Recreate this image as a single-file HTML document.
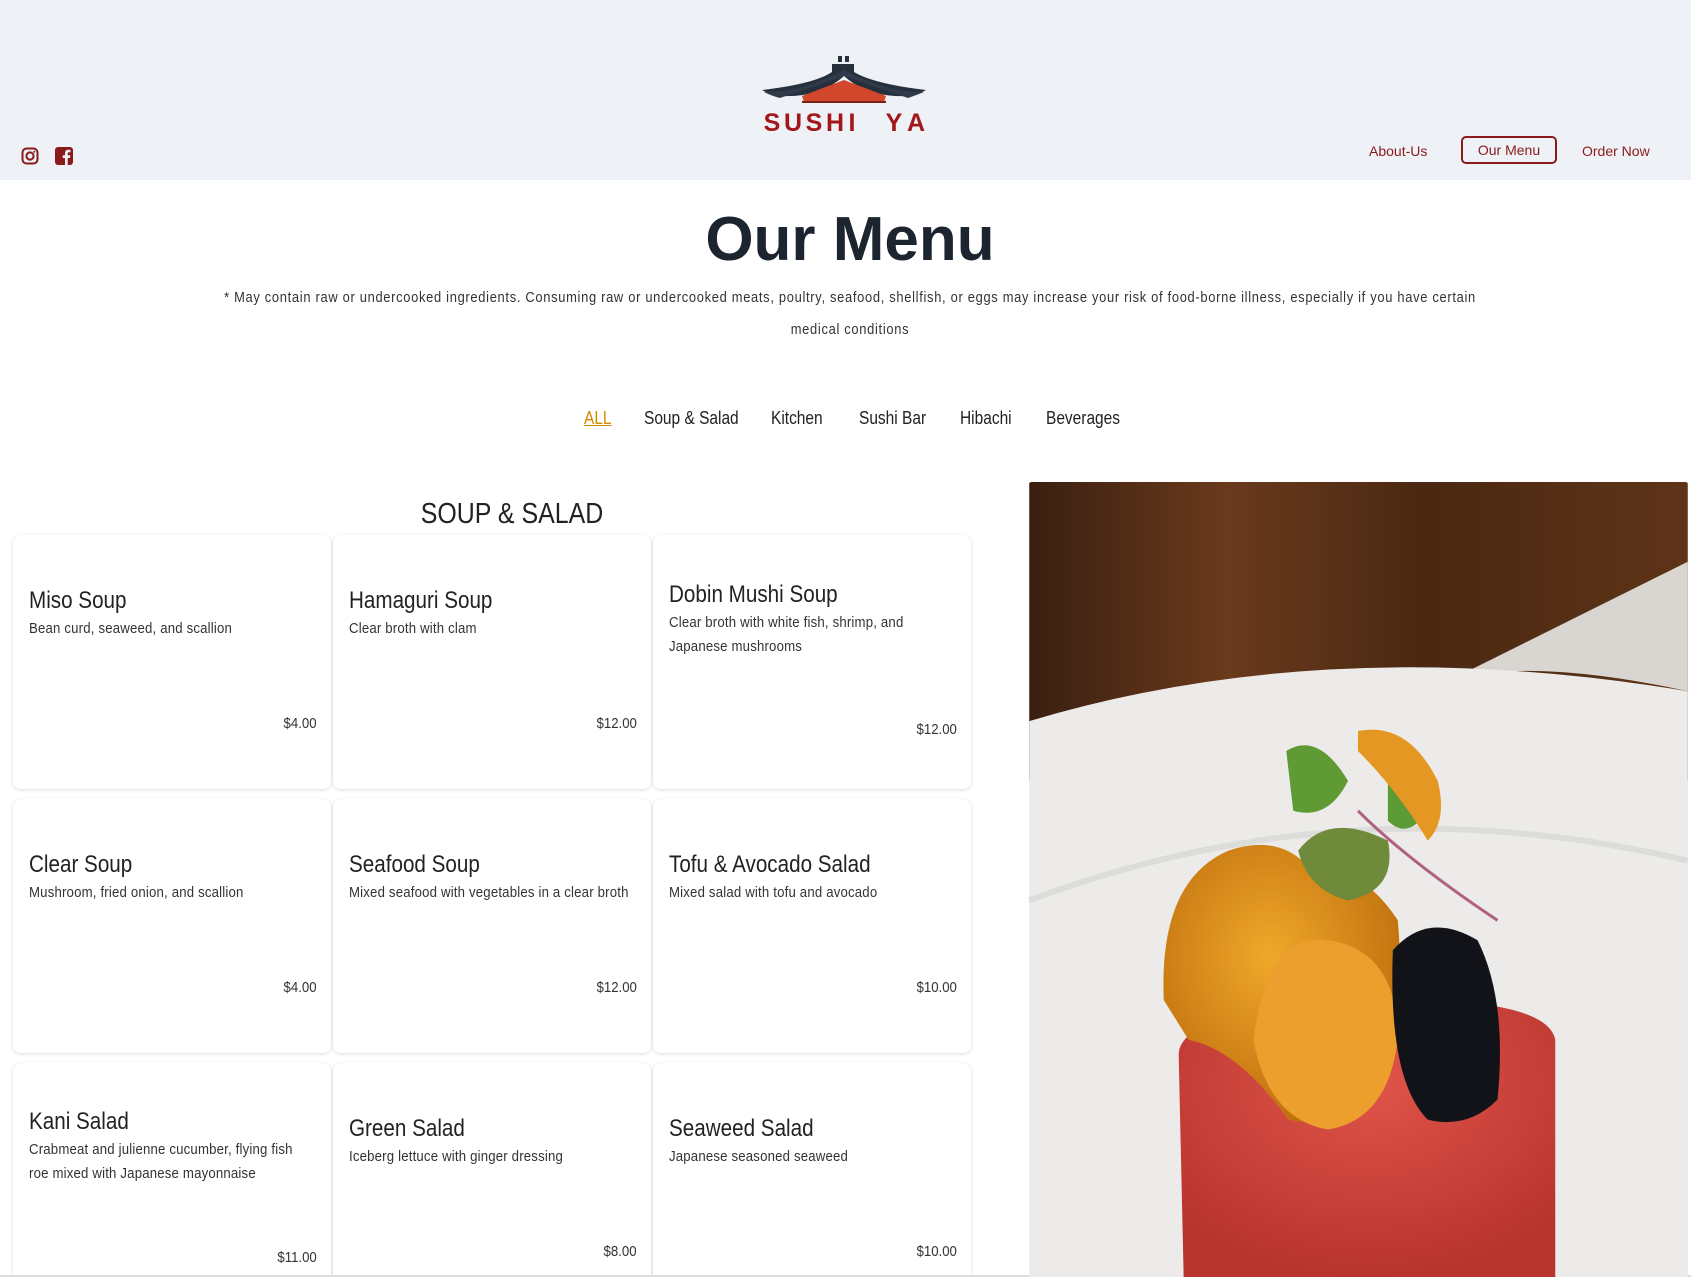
<!DOCTYPE html>
<html><head><meta charset="utf-8"><style>
*{margin:0;padding:0;box-sizing:border-box}
html,body{width:1691px;height:1277px;overflow:hidden}
body{background:#fff;font-family:"Liberation Sans",sans-serif;color:#1f2633;position:relative}
#wrap{position:absolute;left:0;top:0;width:1691px;height:1277px;overflow:hidden}
.hdr{position:absolute;left:0;top:0;width:1691px;height:180px;background:#eef1f6}
.abs{position:absolute}
.nav{font-size:14px;color:#8b1a1a}
.title{position:absolute;left:0;width:1700px;text-align:center;top:204px;font-weight:bold;font-size:62px;color:#1c2430}
.disc{position:absolute;left:117px;width:1466px;text-align:center;top:282px;font-size:15px;line-height:32px;color:#333;letter-spacing:.8px;transform:scaleX(.86);transform-origin:center}
.tab{position:absolute;top:408px;font-size:18px;color:#222;transform:scaleX(.86);transform-origin:left;white-space:nowrap}
.card{position:absolute;width:318px;height:254px;background:#fff;border-radius:8px;box-shadow:0 1px 4px rgba(0,0,0,.13)}
.card h3{position:absolute;left:16px;font-weight:normal;font-size:24px;color:#222;transform:scaleX(.86);transform-origin:left;white-space:nowrap}
.card p{position:absolute;left:16px;width:325px;font-size:15px;line-height:24px;color:#333;letter-spacing:.2px;transform:scaleX(.88);transform-origin:left}
.card .pr{position:absolute;right:14px;font-size:15px;color:#333;transform:scaleX(.88);transform-origin:right}
</style></head><body><div id="wrap">
<div class="hdr"></div>
<svg class="abs" style="left:762px;top:56px" width="164" height="78" viewBox="0 0 164 78">
<rect x="76" y="0" width="4" height="6" fill="#25303f"/><rect x="83" y="0" width="4" height="6" fill="#25303f"/>
<path d="M70 8 h22 v8 q20 12 72 18 q-10 6 -18 6 q-40 2 -64 -20 q-24 22 -64 20 q-8 0 -18 -6 q52 -6 70 -18z" fill="#26303d"/>
<path d="M2 36 q40 0 80 -22 q40 22 80 22 q-10 4 -16 6 l-64 -22 l-64 22 q-8 -2 -16 -6z" fill="#2f3a4a"/>
<path d="M40 40 l42 -16 l42 16 l-2 6 h-80z" fill="#d2462b"/>
<path d="M40 46 h84" stroke="#7a2315" stroke-width="2"/>
<g font-family="Liberation Sans" font-weight="bold" font-size="25" fill="#a3171b" text-anchor="middle">
<text x="10" y="75">S</text><text x="31" y="75">U</text><text x="52" y="75">S</text><text x="73" y="75">H</text><text x="90" y="75">I</text><text x="132" y="75">Y</text><text x="154" y="75">A</text></g>
</svg>
<svg class="abs" style="left:21px;top:147px" width="18" height="18" viewBox="0 0 18 18"><rect x="1.5" y="1.5" width="15" height="15" rx="4" fill="none" stroke="#8b1a1a" stroke-width="2"/><circle cx="9" cy="9" r="3.6" fill="none" stroke="#8b1a1a" stroke-width="2"/><circle cx="13.3" cy="4.7" r="1" fill="#8b1a1a"/></svg>
<svg class="abs" style="left:55px;top:147px" width="18" height="18" viewBox="0 0 18 18"><rect width="18" height="18" rx="3" fill="#8b1a1a"/><path d="M10 18v-7h-2.3v-2.7h2.3v-2c0-2.3 1.4-3.5 3.4-3.5h2v2.5h-1.4c-1 0-1.3.5-1.3 1.2v1.8h2.7l-.4 2.7h-2.3v7z" fill="#eef1f6"/></svg>
<div class="abs nav" style="left:1369px;top:143px">About-Us</div>
<div class="abs nav" style="left:1461px;top:136px;width:96px;height:28px;border:2px solid #8b1a1a;border-radius:5px;text-align:center;line-height:24px">Our Menu</div>
<div class="abs nav" style="left:1582px;top:143px">Order Now</div>
<div class="title">Our Menu</div>
<div class="disc">* May contain raw or undercooked ingredients. Consuming raw or undercooked meats, poultry, seafood, shellfish, or eggs may increase your risk of food-borne illness, especially if you have certain medical conditions</div>
<div class="tab" style="left:584px;color:#d18a00;text-decoration:underline">ALL</div>
<div class="tab" style="left:644px">Soup &amp; Salad</div>
<div class="tab" style="left:771px">Kitchen</div>
<div class="tab" style="left:859px">Sushi Bar</div>
<div class="tab" style="left:960px">Hibachi</div>
<div class="tab" style="left:1046px">Beverages</div>
<div class="abs" style="left:0;width:1024px;text-align:center;top:498px;font-size:29px;color:#222;transform:scaleX(.86)">SOUP &amp; SALAD</div>

<div class="card" style="left:13px;top:535px"><h3 style="top:52px">Miso Soup</h3><p style="top:82px">Bean curd, seaweed, and scallion</p><div class="pr" style="top:180px">$4.00</div></div>
<div class="card" style="left:333px;top:535px"><h3 style="top:52px">Hamaguri Soup</h3><p style="top:82px">Clear broth with clam</p><div class="pr" style="top:180px">$12.00</div></div>
<div class="card" style="left:653px;top:535px"><h3 style="top:46px">Dobin Mushi Soup</h3><p style="top:76px">Clear broth with white fish, shrimp, and Japanese mushrooms</p><div class="pr" style="top:186px">$12.00</div></div>
<div class="card" style="left:13px;top:799px"><h3 style="top:52px">Clear Soup</h3><p style="top:82px">Mushroom, fried onion, and scallion</p><div class="pr" style="top:180px">$4.00</div></div>
<div class="card" style="left:333px;top:799px"><h3 style="top:52px">Seafood Soup</h3><p style="top:82px">Mixed seafood with vegetables in a clear broth</p><div class="pr" style="top:180px">$12.00</div></div>
<div class="card" style="left:653px;top:799px"><h3 style="top:52px">Tofu &amp; Avocado Salad</h3><p style="top:82px">Mixed salad with tofu and avocado</p><div class="pr" style="top:180px">$10.00</div></div>
<div class="card" style="left:13px;top:1063px"><h3 style="top:45px">Kani Salad</h3><p style="top:75px">Crabmeat and julienne cucumber, flying fish roe mixed with Japanese mayonnaise</p><div class="pr" style="top:186px">$11.00</div></div>
<div class="card" style="left:333px;top:1063px"><h3 style="top:52px">Green Salad</h3><p style="top:82px">Iceberg lettuce with ginger dressing</p><div class="pr" style="top:180px">$8.00</div></div>
<div class="card" style="left:653px;top:1063px"><h3 style="top:52px">Seaweed Salad</h3><p style="top:82px">Japanese seasoned seaweed</p><div class="pr" style="top:180px">$10.00</div></div>
<div class="abs" style="left:0;top:1275px;width:1691px;height:2px;background:#ddd"></div>

<svg class="abs" style="left:1028px;top:482px;border-radius:4px" width="661" height="795" viewBox="0 0 661 798">
<defs>
<linearGradient id="w" x1="0" x2="1"><stop offset="0" stop-color="#3a1f10"/><stop offset=".3" stop-color="#6a3a1c"/><stop offset=".6" stop-color="#4a2812"/><stop offset="1" stop-color="#5e3418"/></linearGradient>
<radialGradient id="u" cx=".45" cy=".4" r=".6"><stop offset="0" stop-color="#f0a82a"/><stop offset="1" stop-color="#c0700e"/></radialGradient>
<radialGradient id="t" cx=".5" cy=".3" r=".7"><stop offset="0" stop-color="#e0544a"/><stop offset="1" stop-color="#b8342e"/></radialGradient>
</defs>
<rect width="661" height="798" fill="#e9e9e7"/>
<rect width="661" height="300" fill="url(#w)"/>
<path d="M420 200 L661 80 L661 210 Q500 175 420 200z" fill="#d9d5d0"/>
<path d="M0 240 Q300 150 661 210 L661 798 L0 798z" fill="#ecebe9"/>
<path d="M0 420 Q320 300 661 380" stroke="#dcdcda" stroke-width="6" fill="none"/>
<path d="M150 575 Q150 530 330 520 Q520 515 528 560 L528 798 L155 798z" fill="url(#t)"/>
<path d="M135 520 Q130 400 200 370 Q260 350 290 400 Q330 380 370 440 Q380 560 340 620 Q300 650 260 640 Q210 570 160 560z" fill="url(#u)"/>
<path d="M225 560 Q240 450 300 460 Q370 470 370 560 Q360 640 300 650 Q240 640 225 560z" fill="#ec9f2c"/>
<path d="M365 470 Q400 430 450 460 Q480 520 470 620 Q440 650 400 640 Q360 600 365 470z" fill="#121318"/>
<path d="M270 370 Q300 330 360 360 Q370 410 320 420 Q280 410 270 370z" fill="#6f8a3a"/>
<path d="M258 270 Q290 250 320 300 Q300 340 265 330z" fill="#5f9a35"/>
<path d="M360 300 Q400 290 400 330 Q380 360 360 340z" fill="#5c9a35"/>
<path d="M330 250 Q380 240 410 300 Q420 340 400 360 Q370 310 330 270z" fill="#e49722"/>
<path d="M330 330 Q380 380 470 440" stroke="#b06080" stroke-width="3" fill="none"/>
</svg>
</div></body></html>
